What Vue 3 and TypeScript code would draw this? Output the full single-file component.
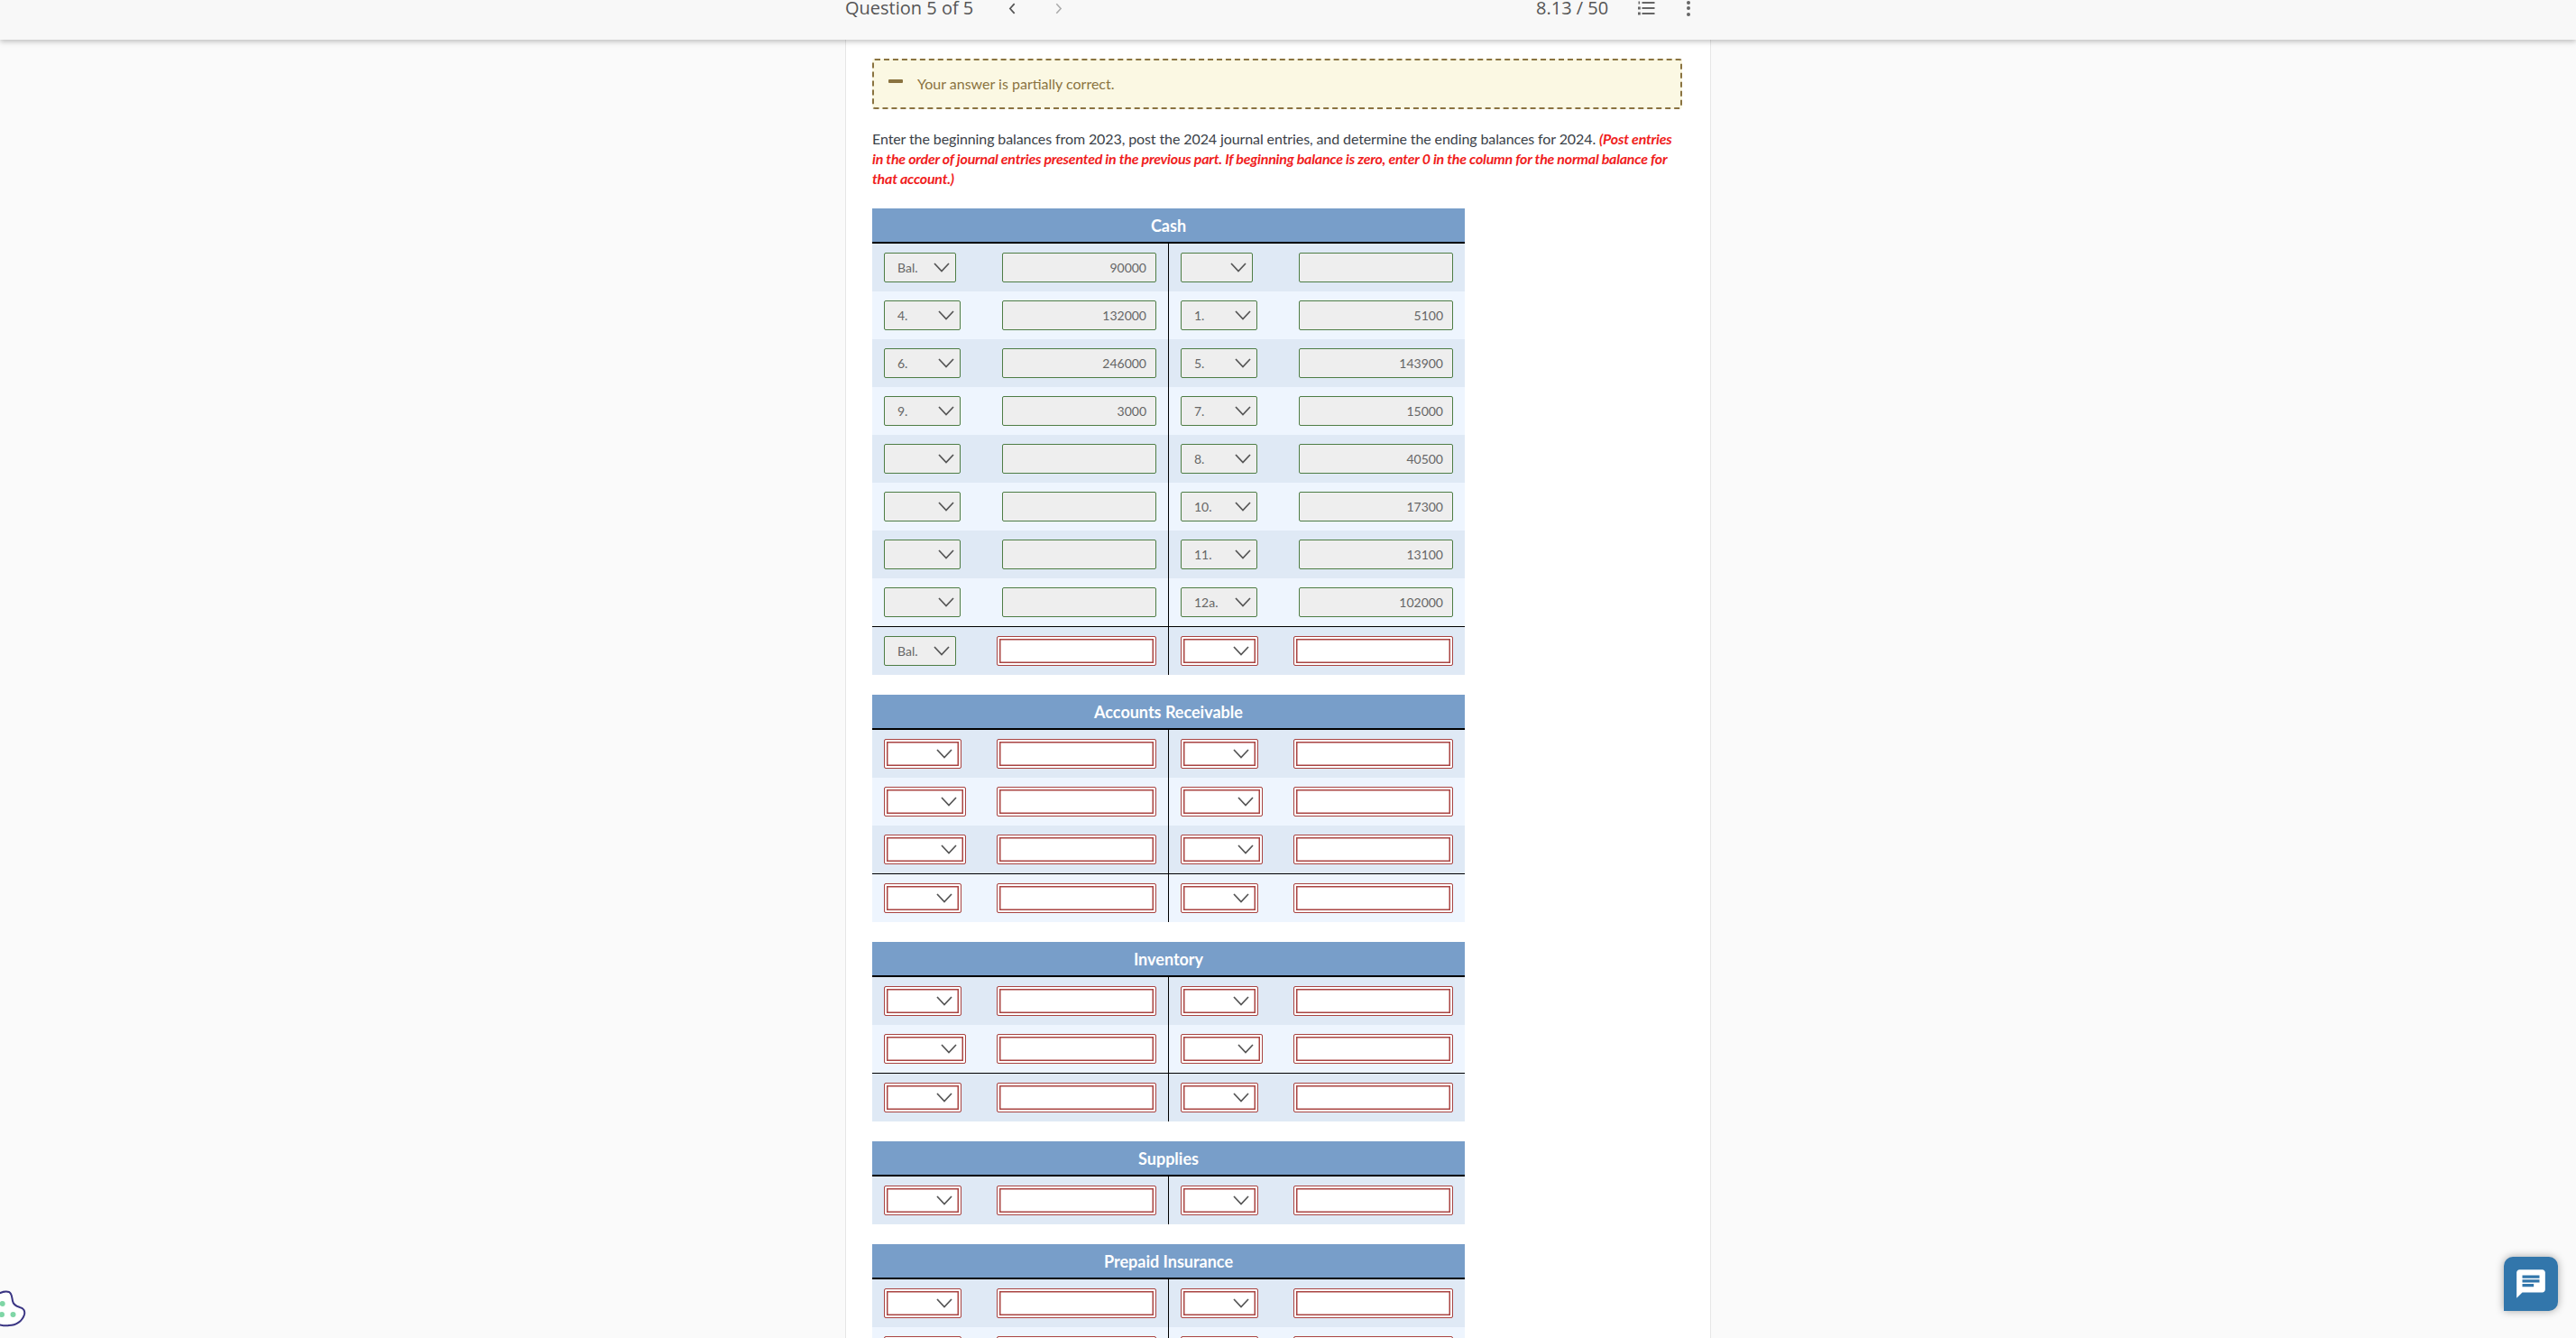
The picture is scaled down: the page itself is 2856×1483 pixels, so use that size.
<template>
  <div class="page">
    <header class="topbar">
      <div class="topbar-inner">
        <span class="question">Question 5 of 5</span>
        <svg class="chev chev-prev" viewBox="0 0 10 14" fill="none" stroke="#555" stroke-width="1.6"><path d="M7.5 2 3 7l4.5 5" /></svg>
        <svg class="chev chev-next" viewBox="0 0 10 14" fill="none" stroke="#aaa" stroke-width="1.4"><path d="M2.5 2 7 7l-4.5 5" /></svg>
        <span class="score">8.13 / 50</span>
        <svg class="list-icon" viewBox="0 0 20 16" fill="#666">
          <rect x="5.5" y="1" width="14" height="2" />
          <rect x="5.5" y="7" width="14" height="2" />
          <rect x="5.5" y="13" width="14" height="2" />
          <rect x="1.5" y="0.5" width="1.6" height="3" />
          <rect x="1" y="6.5" width="2.8" height="3" />
          <rect x="1" y="12.5" width="2.8" height="3" />
        </svg>
        <div class="dots"><i></i><i></i><i></i></div>
      </div>
    </header>

    <main class="card">
      <div class="alert">
        <span class="alert-minus"></span>
        <span>Your answer is partially correct.</span>
      </div>

      <p class="prompt">
        Enter the beginning balances from 2023, post the 2024 journal entries, and determine the ending balances for 2024.
        <em>(Post entries in the order of journal entries presented in the previous part. If beginning balance is zero, enter 0 in the column for the normal balance for that account.)</em>
      </p>

      <section v-for="acct in accounts" :key="acct.name" class="account">
        <h3 class="account-title">{{ acct.name }}</h3>
        <div
          v-for="(row, i) in acct.rows"
          :key="i"
          class="row"
          :class="{ alt: i % 2 === 1, total: row.total }"
        >
          <div v-for="(side, s) in [row.left, row.right]" :key="s" class="side">
            <div class="select" :class="[side.badSelect ? 'bad' : 'ok']" :style="{ width: side.selectWidth + 'px' }">
              <span class="select-text">{{ side.ref }}</span>
              <svg class="caret" viewBox="0 0 18 11" fill="none" stroke="#555" stroke-width="1.7"><path d="M1 1l8 8.500 8-8.500" /></svg>
            </div>
            <div class="amount" :class="[side.badAmount ? 'bad' : 'ok']">
              <span class="amount-text">{{ side.amount }}</span>
            </div>
          </div>
        </div>
      </section>
    </main>

    <svg class="cookie" viewBox="0 0 30 42">
      <path d="M-2 5C2 3 7 2 10 3c3 1 3 5 4 10 1 5 5 6 8 7 4 1 6 4 5 8-2 7-9 12-17 12-4 1-8 0-12-1z" fill="#fff" stroke="#3a3583" stroke-width="2" />
      <circle cx="2.700" cy="16" r="3" fill="#7fd6a6" />
      <circle cx="2" cy="28" r="3" fill="#7fd6a6" />
      <circle cx="14.500" cy="28" r="3" fill="#7fd6a6" />
    </svg>

    <button class="chat" type="button">
      <svg viewBox="0 0 24 24" fill="#fff"><path d="M20 2H4c-1.100 0-2 .9-2 2v18l4-4h14c1.100 0 2-.9 2-2V4c0-1.100-.9-2-2-2zM6 9h12v2H6V9zm8 5H6v-2h8v2zm4-6H6V6h12v2z" /></svg>
    </button>
  </div>
</template>

<script setup lang="ts">
interface Side {
  ref: string
  amount: string
  badSelect: boolean
  badAmount: boolean
  selectWidth: number
}

interface Row {
  left: Side
  right: Side
  total: boolean
}

interface Account {
  name: string
  rows: Row[]
}

const ok = (ref: string, amount: string, selectWidth = 85): Side => ({
  ref,
  amount,
  badSelect: false,
  badAmount: false,
  selectWidth
})

const bad = (selectWidth = 86): Side => ({
  ref: '',
  amount: '',
  badSelect: true,
  badAmount: true,
  selectWidth
})

const blankRow = (selectWidth = 86, total = false): Row => ({
  left: bad(selectWidth),
  right: bad(selectWidth),
  total
})

const accounts: Account[] = [
  {
    name: 'Cash',
    rows: [
      { left: ok('Bal.', '90000', 80), right: ok('', '', 80), total: false },
      { left: ok('4.', '132000'), right: ok('1.', '5100'), total: false },
      { left: ok('6.', '246000'), right: ok('5.', '143900'), total: false },
      { left: ok('9.', '3000'), right: ok('7.', '15000'), total: false },
      { left: ok('', ''), right: ok('8.', '40500'), total: false },
      { left: ok('', ''), right: ok('10.', '17300'), total: false },
      { left: ok('', ''), right: ok('11.', '13100'), total: false },
      { left: ok('', ''), right: ok('12a.', '102000'), total: false },
      // ending balance: the label is locked, the amount is still wrong
      { left: { ...ok('Bal.', '', 80), badAmount: true }, right: bad(), total: true }
    ]
  },
  {
    name: 'Accounts Receivable',
    rows: [blankRow(), blankRow(91), blankRow(91), blankRow(86, true)]
  },
  {
    name: 'Inventory',
    rows: [blankRow(), blankRow(91), blankRow(86, true)]
  },
  {
    name: 'Supplies',
    rows: [blankRow()]
  },
  {
    name: 'Prepaid Insurance',
    rows: [blankRow(), blankRow()]
  }
]
</script>

<style scoped>
.page {
  position: relative;
  height: 1483px;
  overflow: hidden;
  background: #fafafa;
  font-family: Lato, "Liberation Sans", sans-serif;
}

.topbar {
  position: relative;
  z-index: 2;
  height: 44px;
  background: #f8f8f8;
  box-shadow: 0 2px 6px rgba(0, 0, 0, 0.25);
}

.topbar-inner {
  display: flex;
  align-items: center;
  width: 960px;
  height: 18px;
  margin-left: 937px;
  color: #555;
  font-family: "Open Sans", sans-serif;
  font-size: 20px;
  line-height: 18px;
}

.question {
  width: 179px;
}

.chev {
  width: 12px;
  height: 15px;
}

.chev-next {
  margin-left: 40px;
}

.score {
  margin-left: 523px;
  font-size: 20px;
}

.list-icon {
  width: 20px;
  height: 16px;
  margin-left: 32px;
}

.dots {
  display: flex;
  flex-direction: column;
  gap: 2.500px;
  margin-left: 35px;
}

.dots i {
  width: 4px;
  height: 4px;
  border-radius: 50%;
  background: #666;
}

.card {
  box-sizing: border-box;
  width: 960px;
  height: 1439px;
  margin-left: 937px;
  padding: 21px 30px 0 29px;
  background: #fff;
  border-left: 1px solid #e6e6e6;
  border-right: 1px solid #e6e6e6;
}

.alert {
  box-sizing: border-box;
  display: flex;
  align-items: center;
  gap: 16px;
  width: 898px;
  height: 56px;
  padding: 0 16px 2px;
  background: #fbf8e3;
  border: 2px dashed #8a7340;
  border-radius: 3px;
  color: #8a7340;
  font-size: 16px;
}

.alert-minus {
  width: 16px;
  height: 4px;
  margin-top: -4px;
  border-radius: 1px;
  background: #8a7340;
}

.prompt {
  width: 897px;
  margin: 22px 0 21.500px;
  color: #3a4148;
  font-size: 16px;
  line-height: 22px;
  letter-spacing: -0.1px;
}

.prompt em {
  color: #f01d1d;
  font-weight: 700;
  font-style: italic;
  letter-spacing: -0.24px;
}

.account {
  width: 657px;
  margin-bottom: 22px;
}

.account-title {
  height: 37px;
  margin: 0;
  background: #789ec9;
  border-bottom: 2px solid #000;
  color: #fff;
  font-size: 18px;
  font-weight: 700;
  line-height: 38px;
  text-align: center;
}

.row {
  display: grid;
  grid-template-columns: 329px 328px;
  height: 53px;
  background: #dfe9f5;
}

.row.alt {
  background: #eef5fe;
}

.row.total {
  box-sizing: border-box;
  height: 54px;
  border-top: 1px solid #000;
}

.side {
  display: flex;
  align-items: flex-start;
  justify-content: space-between;
  padding: 10px 13px 0;
}

.side:first-child {
  border-right: 1px solid #000;
}

.select,
.amount {
  box-sizing: border-box;
  display: flex;
  align-items: center;
  height: 33px;
  border-radius: 2px;
  font-size: 14px;
  color: #666;
}

.select {
  justify-content: space-between;
  padding: 0 6px 0 14px;
}

.select.bad {
  padding-right: 9px;
}

.amount {
  justify-content: flex-end;
  width: 171px;
  padding-right: 10px;
}

.ok {
  background: #eee;
  border: 1px solid #4e7d45;
}

.bad {
  background: #fff;
  border: 1px solid #a94442;
  box-shadow: inset 0 0 0 2px #fff, inset 0 0 0 3.500px #a94442;
}

.amount.bad {
  width: 177px;
}

.caret {
  width: 18px;
  height: 11px;
  flex-shrink: 0;
}

.cookie {
  position: fixed;
  left: 0;
  bottom: 12px;
  width: 30px;
  height: 42px;
}

.chat {
  position: fixed;
  right: 20px;
  bottom: 30px;
  display: flex;
  align-items: center;
  justify-content: center;
  width: 60px;
  height: 60px;
  padding: 0;
  border: none;
  border-radius: 10px 10px 10px 0;
  background: #3276ab;
  box-shadow: 0 0 10px rgba(0, 0, 0, 0.35);
}

.chat svg {
  width: 38px;
  height: 38px;
}
</style>

<style>
html, body {
  margin: 0;
  overflow: hidden;
}
</style>
